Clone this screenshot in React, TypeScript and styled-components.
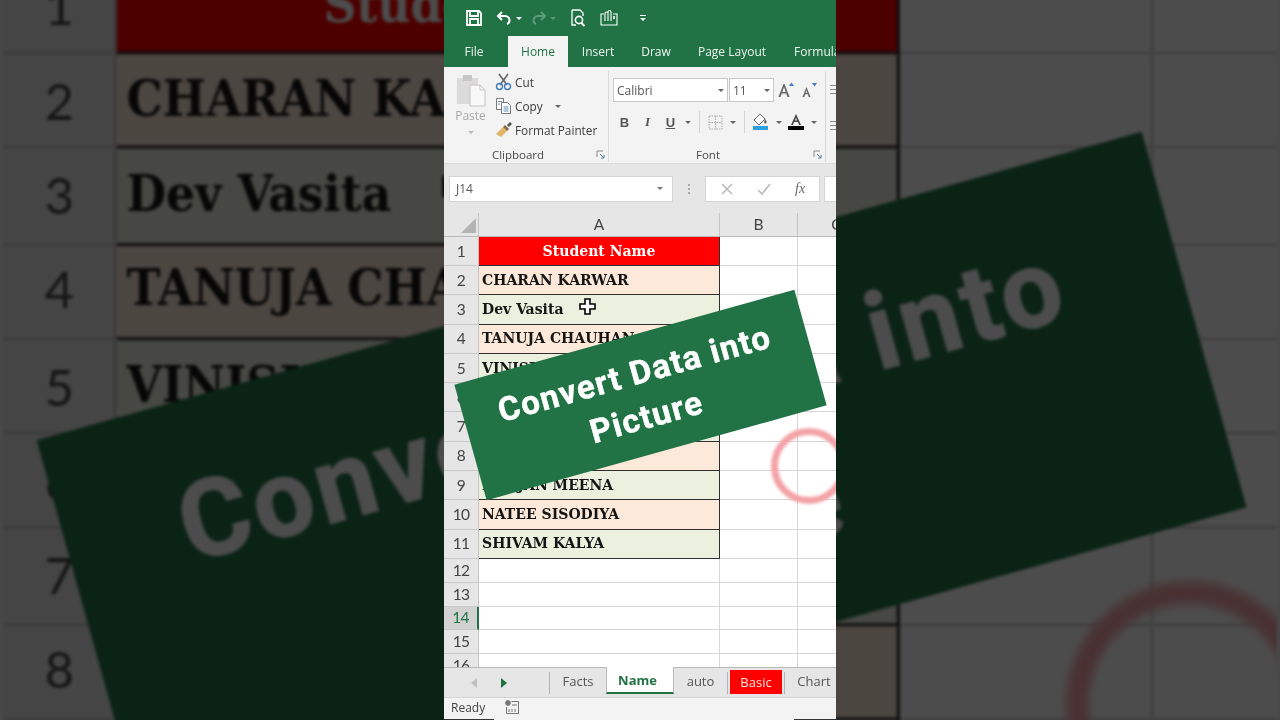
import React from "react";
import styled, { createGlobalStyle } from "styled-components";

const Global = createGlobalStyle`
  html, body { margin: 0; padding: 0; background: #484848; overflow: hidden; }
  #root { width: 1280px; height: 720px; }
`;

const GREEN = "#217346";
const INK = "#444";

const Stage = styled.div`
  position: relative;
  width: 1280px;
  height: 720px;
  overflow: hidden;
  display: flex;
  justify-content: center;
  background: #484848;
`;
const Backdrop = styled.div`
  position: absolute;
  inset: 0;
  display: flex;
  justify-content: center;
  transform: scale(3.25);
  transform-origin: 640px 360px;
  filter: brightness(0.3) blur(0.35px);
`;
const Frame = styled.div`
  position: relative;
  width: 392px;
  height: 720px;
  flex: none;
  overflow: hidden;
  display: flex;
  flex-direction: column;
  background: #fff;
  font-family: "Open Sans", "Liberation Sans", sans-serif;
  color: ${INK};
  filter: blur(0.3px);
`;

/* title bar */
const TitleBar = styled.div`
  height: 36px;
  flex: none;
  background: ${GREEN};
  display: flex;
  align-items: center;
  padding-left: 21px;
`;
const QuickIcon = styled.svg<{ $w: number; $ml?: number }>`
  width: ${(p) => p.$w}px;
  height: 20px;
  margin-left: ${(p) => p.$ml ?? 0}px;
  flex: none;
`;

/* ribbon tabs */
const TabBar = styled.div`
  height: 31px;
  flex: none;
  background: ${GREEN};
  display: flex;
  align-items: stretch;
  font-size: 12px;
  white-space: nowrap;
`;
const RibbonTab = styled.div<{ $w: number; $active?: boolean }>`
  width: ${(p) => p.$w}px;
  flex: none;
  display: flex;
  align-items: center;
  justify-content: center;
  background: ${(p) => (p.$active ? "#f3f3f3" : "transparent")};
  color: ${(p) => (p.$active ? GREEN : "#eef5f0")};
`;
const ClippedTab = styled(RibbonTab)`
  justify-content: flex-start;
  padding-left: 14px;
`;

/* ribbon */
const Ribbon = styled.div`
  height: 96px;
  flex: none;
  background: #f3f3f3;
  display: flex;
  border-bottom: 1px solid #dcdcdc;
`;
const Group = styled.div<{ $w: number }>`
  width: ${(p) => p.$w}px;
  flex: none;
  position: relative;
  display: flex;
  flex-direction: column;
  border-right: 1px solid #d8d8d8;
  margin: 4px 0 1px;
  box-sizing: border-box;
`;
const GroupBody = styled.div`
  flex: 1;
  display: flex;
  min-height: 0;
`;
const GroupLabel = styled.div<{ $pr: number }>`
  height: 16px;
  display: flex;
  align-items: center;
  justify-content: center;
  padding-right: ${(p) => p.$pr}px;
  font-size: 11.5px;
  position: relative;
  color: #4a4a4a;
`;
const Launcher = styled.svg`
  position: absolute;
  right: 3px;
  top: 4px;
  width: 9px;
  height: 9px;
`;
const PasteCol = styled.div`
  width: 51px;
  flex: none;
  display: flex;
  flex-direction: column;
  align-items: center;
  padding: 3px 0 0 2px;
  box-sizing: border-box;
  font-size: 12px;
  color: #a8a8a8;
`;
const ClipList = styled.div`
  display: flex;
  flex-direction: column;
  margin-top: -1px;
`;
const ClipItem = styled.div`
  height: 24px;
  display: flex;
  align-items: center;
  font-size: 11.8px;
  gap: 2px;
  color: #3d3d3d;
  white-space: nowrap;
`;
const FontCol = styled.div`
  display: flex;
  flex-direction: column;
  padding-left: 4px;
`;
const FontRow = styled.div<{ $mt: number }>`
  display: flex;
  align-items: center;
  margin-top: ${(p) => p.$mt}px;
  height: 24px;
`;
const Combo = styled.div<{ $w: number }>`
  width: ${(p) => p.$w}px;
  height: 24px;
  box-sizing: border-box;
  flex: none;
  background: #fff;
  border: 1px solid #c8c8c8;
  margin-right: 1px;
  display: flex;
  align-items: center;
  justify-content: space-between;
  padding: 0 3px;
  font-size: 12px;
  color: #555;
`;
const Tool = styled.div<{ $w: number; $serif?: boolean; $under?: boolean }>`
  width: ${(p) => p.$w}px;
  flex: none;
  display: flex;
  align-items: center;
  justify-content: center;
  font-family: ${(p) => (p.$serif ? '"Liberation Serif", serif' : '"Liberation Sans", sans-serif')};
  font-size: 13px;
  font-weight: 700;
  color: #555;
  font-style: ${(p) => (p.$serif ? "italic" : "normal")};
  text-decoration: ${(p) => (p.$under ? "underline" : "none")};
`;
const ToolSep = styled.div`
  width: 10px;
  flex: none;
  display: flex;
  justify-content: center;
  &::before { content: ""; width: 1px; height: 22px; background: #d4d4d4; }
`;
const Caret = styled.span<{ $color?: string; $ml?: number; $mt?: number }>`
  width: 0;
  height: 0;
  display: inline-block;
  margin-left: ${(p) => p.$ml ?? 0}px;
  margin-top: ${(p) => p.$mt ?? 0}px;
  border-left: 3px solid transparent;
  border-right: 3px solid transparent;
  border-top: 3px solid ${(p) => p.$color ?? "#666"};
`;
const Stack = styled.div`
  padding: 17px 0 0 4px;
  display: flex;
  flex-direction: column;
  gap: 25px;
`;

/* formula bar */
const FormulaBar = styled.div`
  height: 49px;
  flex: none;
  background: #e6e6e6;
  display: flex;
  align-items: center;
  padding: 0 0 0 5px;
  box-sizing: border-box;
`;
const NameBox = styled.div`
  width: 224px;
  height: 26px;
  box-sizing: border-box;
  background: #fff;
  border: 1px solid #d4d4d4;
  display: flex;
  align-items: center;
  justify-content: space-between;
  padding: 0 9px 0 6px;
  font-size: 12px;
  color: #555;
  flex: none;
`;
const Dots = styled.div`
  width: 32px;
  flex: none;
  display: flex;
  flex-direction: column;
  align-items: center;
  gap: 2px;
  & > i { width: 2px; height: 2px; background: #aaa; display: block; }
`;
const FxBox = styled.div`
  width: 115px;
  height: 26px;
  box-sizing: border-box;
  background: #fff;
  border: 1px solid #d4d4d4;
  display: flex;
  align-items: center;
  justify-content: space-around;
  padding: 0 2px;
  flex: none;
`;
const FxText = styled.span`
  font-family: "Liberation Serif", serif;
  font-style: italic;
  font-size: 14px;
  color: #666;
`;
const InputBox = styled.div`
  width: 60px;
  height: 26px;
  margin-left: 4px;
  box-sizing: border-box;
  background: #fff;
  border: 1px solid #d4d4d4;
  flex: none;
`;

/* grid */
const ColHeader = styled.div`
  height: 24px;
  flex: none;
  display: flex;
  background: #e6e6e6;
  border-bottom: 1px solid #b8b8b8;
  box-sizing: border-box;
`;
const CornerCell = styled.div`
  width: 35px;
  flex: none;
  box-sizing: border-box;
  border-right: 1px solid #c4c4c4;
  display: flex;
  justify-content: flex-end;
  align-items: flex-end;
  padding: 0 2px 3px 0;
`;
const ColCell = styled.div<{ $w: number }>`
  width: ${(p) => p.$w}px;
  flex: none;
  box-sizing: border-box;
  border-right: 1px solid #c4c4c4;
  display: flex;
  align-items: center;
  justify-content: center;
  padding-bottom: 2px;
  font-family: Lato, "Liberation Sans", sans-serif;
  font-size: 15.5px;
  color: #444;
`;
const SheetBody = styled.div`
  flex: 1;
  min-height: 0;
  overflow: hidden;
`;
const Row = styled.div<{ $h: number }>`
  height: ${(p) => p.$h}px;
  display: flex;
`;
const RowHead = styled.div<{ $selected?: boolean }>`
  width: 35px;
  flex: none;
  box-sizing: border-box;
  display: flex;
  align-items: center;
  justify-content: center;
  padding-bottom: 1px;
  font-family: Lato, "Liberation Sans", sans-serif;
  font-size: 15.5px;
  letter-spacing: -0.7px;
  background: ${(p) => (p.$selected ? "#d2d2d2" : "#e6e6e6")};
  color: ${(p) => (p.$selected ? GREEN : "#444")};
  border-bottom: 1px solid #c8c8c8;
  border-right: ${(p) => (p.$selected ? `2px solid ${GREEN}` : "1px solid #c4c4c4")};
`;
const NameCell = styled.div<{ $bg: string; $head?: boolean; $boxed?: boolean }>`
  width: 241px;
  flex: none;
  box-sizing: border-box;
  display: flex;
  align-items: center;
  justify-content: ${(p) => (p.$head ? "center" : "flex-start")};
  padding: 0 0 2px ${(p) => (p.$head ? 0 : 3)}px;
  background: ${(p) => p.$bg};
  color: ${(p) => (p.$head ? "#fff" : "#151515")};
  font-family: "DejaVu Serif Condensed", "DejaVu Serif", serif;
  font-stretch: condensed;
  font-weight: 700;
  font-size: 15.6px;
  white-space: nowrap;
  overflow: hidden;
  border-bottom: 1px solid ${(p) => (p.$boxed ? "#2e2e2e" : "#d6d6d6")};
  border-right: 1px solid ${(p) => (p.$boxed ? "#2e2e2e" : "#d6d6d6")};
`;
const EmptyCell = styled.div<{ $w: number }>`
  width: ${(p) => p.$w}px;
  flex: none;
  box-sizing: border-box;
  border-bottom: 1px solid #d6d6d6;
  border-right: 1px solid #d6d6d6;
`;

/* sheet tabs */
const SheetTabs = styled.div`
  height: 30px;
  flex: none;
  display: flex;
  align-items: stretch;
  background: #e6e6e6;
  border-top: 1px solid #b8b8b8;
  box-sizing: border-box;
  font-size: 13px;
  white-space: nowrap;
`;
const NavArea = styled.div`
  width: 105px;
  flex: none;
  display: flex;
  align-items: center;
  padding-left: 27px;
  gap: 24px;
  box-sizing: border-box;
`;
const SheetSep = styled.div<{ $ml?: number }>`
  width: 1px;
  height: 22px;
  align-self: center;
  flex: none;
  margin-left: ${(p) => p.$ml ?? 0}px;
  background: #b4b4b4;
`;
const SheetTab = styled.div<{ $w: number; $active?: boolean; $red?: boolean }>`
  width: ${(p) => p.$w}px;
  flex: none;
  box-sizing: border-box;
  display: flex;
  align-items: center;
  justify-content: center;
  padding-right: ${(p) => (p.$active ? 5 : 0)}px;
  color: ${(p) => (p.$active ? GREEN : p.$red ? "#ffe2e2" : "#555")};
  font-weight: ${(p) => (p.$active ? 700 : 400)};
  background: ${(p) => (p.$active ? "#fff" : p.$red ? "#ff0000" : "transparent")};
  margin: ${(p) => (p.$active ? "-1px 0 3px" : p.$red ? "2px 0 3px 2px" : "0 0 3px")};
  border-bottom: ${(p) => (p.$active ? `2px solid ${GREEN}` : "none")};
  border-left: ${(p) => (p.$active ? "1px solid #b8b8b8" : "none")};
  border-right: ${(p) => (p.$active ? "1px solid #b8b8b8" : "none")};
`;

/* status bar */
const StatusBar = styled.div`
  height: 23px;
  flex: none;
  display: flex;
  align-items: center;
  background: #f3f3f3;
  border-top: 1px solid #d4d4d4;
  box-sizing: border-box;
  padding: 0 0 3px 7px;
  font-size: 12px;
  gap: 20px;
  color: #444;
`;

/* overlays */
const Banner = styled.div`
  position: absolute;
  left: 20px;
  top: 335px;
  width: 353px;
  height: 120px;
  transform: rotate(-15.6deg);
  background: ${GREEN};
  color: #fff;
  display: flex;
  align-items: center;
  justify-content: center;
  text-align: center;
  font-family: Roboto, "Liberation Sans", sans-serif;
  font-weight: 700;
  font-size: 33px;
  line-height: 45px;
  letter-spacing: 1.4px;
  -webkit-text-stroke: 0.5px #fff;
`;
const Ring = styled.div`
  position: absolute;
  left: 327px;
  top: 428px;
  width: 76px;
  height: 76px;
  box-sizing: border-box;
  border-radius: 50%;
  border: 7px solid #f3a2a7;
  filter: blur(1.5px);
`;
const Cursor = styled.svg`
  position: absolute;
  left: 135px;
  top: 298px;
  width: 17px;
  height: 17px;
`;
const Progress = styled.div`
  position: absolute;
  left: 0;
  right: 0;
  bottom: 0;
  height: 1px;
  background: linear-gradient(90deg, #333 0 50px, transparent 50px 350px, #333 350px);
`;

const SaveIcon = () => (
  <QuickIcon $w={18} viewBox="0 0 18 20" fill="none" stroke="#fff" strokeWidth="1.8">
    <path d="M2 3h12l2 2v12H2z" />
    <path d="M5 3v5h8V3M5 17v-6h8v6" />
  </QuickIcon>
);
const UndoIcon = ({ color, flip, ml }: { color: string; flip?: boolean; ml: number }) => (
  <QuickIcon $w={16} $ml={ml} viewBox="0 0 16 20" fill="none" stroke={color} strokeWidth="2">
    <g transform={flip ? "translate(16 0) scale(-1 1)" : undefined}>
      <path d="M6 4 2 8l4 4" />
      <path d="M2 8h7a4.500 4.500 0 0 1 4.500 4.500c0 2-1 3-2.500 3.500" />
    </g>
  </QuickIcon>
);
const PreviewIcon = () => (
  <QuickIcon $w={17} $ml={14} viewBox="0 0 17 20" fill="none" stroke="#fff" strokeWidth="1.3">
    <path d="M2 2h8l3 3v3M2 2v15h4" />
    <circle cx="9" cy="12" r="3.600" strokeWidth="1.600" />
    <path d="m11.500 15 3 3" strokeWidth="2" />
  </QuickIcon>
);
const TouchIcon = () => (
  <QuickIcon $w={18} $ml={13} viewBox="0 0 18 20" fill="none" stroke="#fff" strokeWidth="1.1">
    <path d="M4 6H1v11h16V6h-4" />
    <path d="M5 13V5.500a1.500 1.500 0 0 1 3 0V4a1.500 1.500 0 0 1 3 0v9" />
    <path d="M8 5.500V13" />
    <path d="M14 8v3" strokeWidth="1.600" />
  </QuickIcon>
);
const PasteIcon = () => (
  <svg width="30" height="33" viewBox="0 0 30 33">
    <rect x="1" y="4" width="21" height="26" fill="#dcdada" />
    <rect x="7" y="1" width="9" height="6" fill="#c8c6c6" />
    <path d="M14 11h10l5 5v16H14z" fill="#f8f8f8" stroke="#c4c4c4" />
    <path d="M24 11v5h5" fill="none" stroke="#c4c4c4" />
  </svg>
);
const CutIcon = () => (
  <svg width="18" height="18" viewBox="0 0 18 18" fill="none">
    <path d="M4 1 12 12M13 1 5 12" stroke="#666" strokeWidth="1.600" />
    <circle cx="4.500" cy="13.500" r="3" stroke="#3f7cc0" strokeWidth="1.400" />
    <circle cx="12.500" cy="13.500" r="3" stroke="#3f7cc0" strokeWidth="1.400" />
  </svg>
);
const CopyIcon = () => (
  <svg width="18" height="18" viewBox="0 0 18 18" fill="#fff" stroke="#6a6a6a" strokeWidth="0.900">
    <path d="M1.500 1.500h7v11h-7z" />
    <path d="M6.500 5.500h6l3 3v8h-9z" />
    <path d="M3 4.500h4M3 7h2M8.500 10h5M8.500 12h5M8.500 14h5" stroke="#4c7fb8" />
  </svg>
);
const PainterIcon = () => (
  <svg width="18" height="16" viewBox="0 0 18 16">
    <path d="M1 12 8 5l4 4-6 6z" fill="#e3b568" />
    <path d="m8 5 2-2 4 4-2 2z" fill="#8a6a3a" />
    <path d="m12 3 3-3 2 2-3 3z" fill="#555" />
  </svg>
);
const LauncherIcon = () => (
  <Launcher viewBox="0 0 9 9" fill="none" stroke="#8a8a8a" strokeWidth="1">
    <path d="M1 7V1h6" />
    <path d="M4 4l4 4M8 5v3H5" stroke="#5a7fa6" />
  </Launcher>
);
const GrowIcon = ({ up }: { up: boolean }) => (
  <svg width="20" height="18" viewBox="0 0 20 18">
    <path
      d={up
        ? "M6.500 3 1.500 16h2l1.200-3.500h4.600L10.500 16h2L7.500 3zM5.300 11 7 6l1.700 5z"
        : "M6.500 6 2.500 16h1.800l.9-2.700h2.600l.9 2.700h1.800L6.500 6zM5.700 12 6.500 9.200 7.300 12z"}
      fill="#666"
    />
    <path d={up ? "M12 5l2.500-3.500L17 5z" : "M12 2l2.500 3.500L17 2z"} fill="#3f7cc0" />
  </svg>
);
const BorderIcon = () => (
  <svg width="15" height="15" viewBox="0 0 15 15" fill="none" stroke="#a8a8a8" strokeDasharray="1.500 1">
    <rect x="1" y="1" width="13" height="13" />
    <path d="M7.500 1v13M1 7.500h13" />
  </svg>
);
const FillIcon = () => (
  <svg width="18" height="18" viewBox="0 0 18 18">
    <path d="M8 1 2 7l5 5 6-6z" fill="#fff" stroke="#666" />
    <path d="m13 6 2 3-2 2-1-2z" fill="#666" />
    <rect x="1" y="13" width="15" height="4" fill="#2f9fe0" />
  </svg>
);
const ColorIcon = () => (
  <svg width="18" height="18" viewBox="0 0 18 18">
    <path d="M9 1 4 12h2l1-3h4l1 3h2zM8 7.500 9 4.500l1 3z" fill="#444" />
    <rect x="1" y="13" width="16" height="4" fill="#000" />
  </svg>
);
const AlignStack = () => (
  <svg width="7" height="11" viewBox="0 0 7 11" fill="none" stroke="#888">
    <path d="M0 1.500h7M0 5.500h7M0 9.500h7" />
  </svg>
);
const Triangle = ({ color, left }: { color: string; left?: boolean }) => (
  <svg width="6" height="10" viewBox="0 0 6 10">
    <path d={left ? "M6 0v10L0 5z" : "M0 0v10l6-5z"} fill={color} />
  </svg>
);

const ROWS: Array<{ n: number; name: string; bg: string }> = [
  { n: 2, name: "CHARAN KARWAR", bg: "#fde9d9" },
  { n: 3, name: "Dev Vasita", bg: "#ebf1de" },
  { n: 4, name: "TANUJA CHAUHAN", bg: "#fde9d9" },
  { n: 5, name: "VINISHA", bg: "#ebf1de" },
  { n: 6, name: "", bg: "#fde9d9" },
  { n: 7, name: "", bg: "#ebf1de" },
  { n: 8, name: "", bg: "#fde9d9" },
  { n: 9, name: "RANJAN MEENA", bg: "#ebf1de" },
  { n: 10, name: "NATEE SISODIYA", bg: "#fde9d9" },
  { n: 11, name: "SHIVAM KALYA", bg: "#ebf1de" },
];

const Screen = () => (
  <Frame>
    <TitleBar>
      <SaveIcon />
      <UndoIcon color="#fff" ml={13} />
      <Caret $color="#fff" $ml={4} />
      <UndoIcon color="#5f9a7a" flip ml={9} />
      <Caret $color="#5f9a7a" $ml={3} />
      <PreviewIcon />
      <TouchIcon />
      <QuickIcon $w={6} $ml={22} viewBox="0 0 6 20">
        <path d="M0 7h6v1H0zM0 10h6l-3 3z" fill="#fff" />
      </QuickIcon>
    </TitleBar>
    <TabBar>
      <RibbonTab $w={60}>File</RibbonTab>
      <RibbonTab $w={4} />
      <RibbonTab $w={60} $active>Home</RibbonTab>
      <RibbonTab $w={60}>Insert</RibbonTab>
      <RibbonTab $w={56}>Draw</RibbonTab>
      <RibbonTab $w={96}>Page Layout</RibbonTab>
      <ClippedTab $w={90}>Formulas</ClippedTab>
    </TabBar>
    <Ribbon>
      <Group $w={165}>
        <GroupBody>
          <PasteCol>
            <PasteIcon />
            <span>Paste</span>
            <Caret $color="#bbb" $mt={7} />
          </PasteCol>
          <ClipList>
            <ClipItem><CutIcon />Cut</ClipItem>
            <ClipItem><CopyIcon />Copy<Caret $ml={10} /></ClipItem>
            <ClipItem><PainterIcon />Format Painter</ClipItem>
          </ClipList>
        </GroupBody>
        <GroupLabel $pr={16}>Clipboard<LauncherIcon /></GroupLabel>
      </Group>
      <Group $w={217}>
        <GroupBody>
          <FontCol>
            <FontRow $mt={7}>
              <Combo $w={115}>Calibri<Caret /></Combo>
              <Combo $w={45}>11<Caret /></Combo>
              <Tool $w={23}><GrowIcon up /></Tool>
              <Tool $w={23}><GrowIcon up={false} /></Tool>
            </FontRow>
            <FontRow $mt={8}>
              <Tool $w={23}>B</Tool>
              <Tool $w={23} $serif>I</Tool>
              <Tool $w={23} $under>U</Tool>
              <Tool $w={12}><Caret /></Tool>
              <ToolSep />
              <Tool $w={22}><BorderIcon /></Tool>
              <Tool $w={13}><Caret /></Tool>
              <ToolSep />
              <Tool $w={24}><FillIcon /></Tool>
              <Tool $w={11}><Caret /></Tool>
              <Tool $w={24}><ColorIcon /></Tool>
              <Tool $w={11}><Caret /></Tool>
            </FontRow>
          </FontCol>
        </GroupBody>
        <GroupLabel $pr={18}>Font<LauncherIcon /></GroupLabel>
      </Group>
      <Stack><AlignStack /><AlignStack /></Stack>
    </Ribbon>
    <FormulaBar>
      <NameBox>J14<Caret $color="#777" /></NameBox>
      <Dots><i /><i /><i /></Dots>
      <FxBox>
        <svg width="14" height="14" viewBox="0 0 14 14" stroke="#bbb" strokeWidth="1.600"><path d="m2 2 10 10M12 2 2 12" /></svg>
        <svg width="14" height="14" viewBox="0 0 14 14" stroke="#bbb" strokeWidth="1.600" fill="none"><path d="m1 8 4 4 8-10" /></svg>
        <FxText>fx</FxText>
      </FxBox>
      <InputBox />
    </FormulaBar>
    <ColHeader>
      <CornerCell>
        <svg width="15" height="15" viewBox="0 0 15 15"><path d="M15 0v15H0z" fill="#b4b4b4" /></svg>
      </CornerCell>
      <ColCell $w={241}>A</ColCell>
      <ColCell $w={78}>B</ColCell>
      <ColCell $w={78}>C</ColCell>
    </ColHeader>
    <SheetBody>
      <Row $h={29}>
        <RowHead>1</RowHead>
        <NameCell $bg="#ff0000" $head $boxed>Student Name</NameCell>
        <EmptyCell $w={78} />
        <EmptyCell $w={78} />
      </Row>
      {ROWS.map((r) => (
        <Row $h={29.3} key={r.n}>
          <RowHead>{r.n}</RowHead>
          <NameCell $bg={r.bg} $boxed>{r.name}</NameCell>
          <EmptyCell $w={78} />
          <EmptyCell $w={78} />
        </Row>
      ))}
      {[12, 13, 14, 15, 16].map((n) => (
        <Row $h={23.8} key={n}>
          <RowHead $selected={n === 14}>{n}</RowHead>
          <NameCell $bg="#fff" />
          <EmptyCell $w={78} />
          <EmptyCell $w={78} />
        </Row>
      ))}
    </SheetBody>
    <SheetTabs>
      <NavArea>
        <Triangle color="#c0c0c0" left />
        <Triangle color={GREEN} />
      </NavArea>
      <SheetSep />
      <SheetTab $w={56}>Facts</SheetTab>
      <SheetTab $w={68} $active>Name</SheetTab>
      <SheetTab $w={53}>auto</SheetTab>
      <SheetSep />
      <SheetTab $w={52} $red>Basic</SheetTab>
      <SheetSep $ml={2} />
      <SheetTab $w={58}>Chart</SheetTab>
    </SheetTabs>
    <StatusBar>
      Ready
      <svg width="15" height="15" viewBox="0 0 15 15" fill="none" stroke="#777">
        <circle cx="3" cy="3" r="2.400" fill="#777" />
        <path d="M6.500 1.500h7v12h-12V7M4 9v3M7 9v3M10 9v3M7 5h5" />
      </svg>
    </StatusBar>
    <Progress />
    <Cursor viewBox="0 0 17 17">
      <path d="M6 1h5v5h5v5h-5v5H6v-5H1V6h5z" fill="#fff" stroke="#000" strokeWidth="1.600" />
    </Cursor>
    <Ring />
    <Banner>Convert Data into<br />Picture</Banner>
  </Frame>
);

export default function App() {
  return (
    <Stage>
      <Global />
      <Backdrop aria-hidden="true"><Screen /></Backdrop>
      <Screen />
    </Stage>
  );
}
